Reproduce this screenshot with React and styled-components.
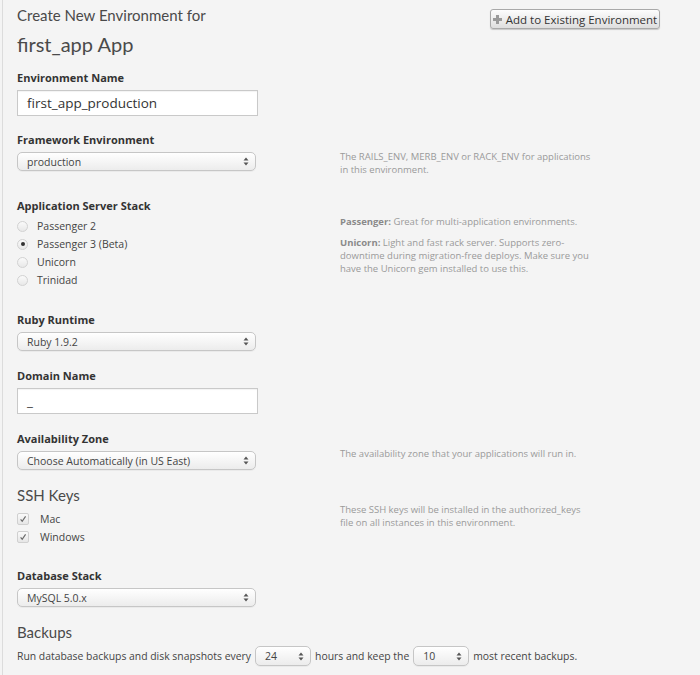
import React from "react";
import styled, { createGlobalStyle } from "styled-components";

const Global = createGlobalStyle`
  html, body { margin: 0; padding: 0; background: #f4f4f4; }
  body { font-family: "Open Sans", "Liberation Sans", sans-serif; color: #333; }
  * { box-sizing: border-box; }
`;

const Page = styled.div`
  margin-left: 2px;
  border-left: 1px solid #dcdcdc;
  padding: 4px 0 0 14px;
  width: 698px;
  min-height: 675px;
  background: #f4f4f4;
`;

const Header = styled.div`
  display: flex;
  justify-content: space-between;
  align-items: flex-start;
  width: 643px;
`;

const Titles = styled.div`
  display: flex;
  flex-direction: column;
`;

const Title = styled.div`
  font-family: "Lato", "Open Sans", sans-serif;
  font-size: ${(p) => p.$size}px;
  line-height: ${(p) => p.$lh}px;
  color: #4a4a4a;
  margin-top: ${(p) => p.$mt || 0}px;
`;

const AddButton = styled.button`
  margin-top: 5px;
  width: 170px;
  height: 20px;
  display: flex;
  align-items: center;
  justify-content: center;
  gap: 4px;
  border: 1px solid #a9a9a9;
  border-radius: 3px;
  background: linear-gradient(#fdfdfd, #dedede);
  box-shadow: 0 1px 1px rgba(0, 0, 0, 0.18);
  font-family: "Open Sans", sans-serif;
  font-size: 11.5px;
  color: #333;
  padding: 0;
`;

const Field = styled.div`
  display: grid;
  grid-template-columns: 323px 265px;
  margin-top: ${(p) => p.$mt}px;
`;

const Label = styled.div`
  grid-column: 1 / span 2;
  font-size: 11px;
  font-weight: 700;
  line-height: 14px;
  color: #333;
  margin-bottom: ${(p) => (p.$mb == null ? 5 : p.$mb)}px;
`;

const Heading = styled.div`
  grid-column: 1 / span 2;
  font-family: "Lato", "Open Sans", sans-serif;
  font-size: 15px;
  line-height: 18px;
  color: #4a4a4a;
  margin-bottom: ${(p) => p.$mb || 0}px;
`;

const Control = styled.div`
  grid-column: 1;
`;

const Desc = styled.div`
  grid-column: 2;
  align-self: start;
  margin-top: ${(p) => p.$mt || 0}px;
  margin-bottom: -40px;
  max-width: 255px;
  font-size: 9.5px;
  line-height: 13px;
  color: #9a9a9a;
`;

const DescPara = styled.div`
  margin-bottom: 8px;
`;

const DescKey = styled.span`
  color: #8a8a8a;
  font-weight: 700;
`;

const TextInput = styled.div`
  width: 241px;
  height: 26px;
  background: #fff;
  border: 1px solid #c9c9c9;
  box-shadow: inset 0 1px 1px rgba(0, 0, 0, 0.05);
  font-size: 13.5px;
  line-height: 24px;
  padding-left: 9px;
  color: #333;
`;

const SelectBox = styled.div`
  width: ${(p) => p.$w || 239}px;
  height: ${(p) => p.$h || 19}px;
  flex-shrink: 0;
  display: flex;
  align-items: center;
  justify-content: space-between;
  padding: 0 6px 0 9px;
  border: 1px solid #c6c6c6;
  border-radius: 5px;
  background: linear-gradient(#ffffff, #ececec);
  box-shadow: 0 1px 0 rgba(0, 0, 0, 0.04);
  font-size: 10.5px;
  color: #444;
`;

const Arrows = () => (
  <svg width="6" height="9" viewBox="0 0 6 9">
    <path d="M3 0.5 L5.5 3.5 H0.5 Z" fill="#555" />
    <path d="M3 8.5 L5.5 5.5 H0.5 Z" fill="#555" />
  </svg>
);

const Select = ({ children, w, h }) => (
  <SelectBox $w={w} $h={h}>
    <span>{children}</span>
    <Arrows />
  </SelectBox>
);

const OptionList = styled.div`
  display: flex;
  flex-direction: column;
`;

const OptionRow = styled.div`
  display: flex;
  align-items: center;
  height: 18px;
  font-size: 10.5px;
  color: #444;
  gap: 9px;
`;

const RadioDot = styled.span`
  width: 11px;
  height: 11px;
  border-radius: 50%;
  border: 1px solid #d2d2d2;
  background: linear-gradient(#fafafa, #e8e8e8);
  display: flex;
  align-items: center;
  justify-content: center;
  &::after {
    content: "";
    width: 4px;
    height: 4px;
    border-radius: 50%;
    background: ${(p) => (p.$on ? "#333" : "transparent")};
  }
`;

const CheckBox = styled.span`
  width: 12px;
  height: 12px;
  border-radius: 2px;
  border: 1px solid #d0d0d0;
  background: linear-gradient(#fafafa, #e6e6e6);
  display: flex;
  align-items: center;
  justify-content: center;
  margin-right: 2px;
`;

const Tick = () => (
  <svg width="8" height="8" viewBox="0 0 9 9">
    <path d="M1.8 5 L3.6 7 L7.4 1.6" stroke="#6a6a6a" strokeWidth="1.3" fill="none" />
  </svg>
);

const Plus = () => (
  <svg width="9" height="9" viewBox="0 0 9 9">
    <path d="M3 0 H6 V3 H9 V6 H6 V9 H3 V6 H0 V3 H3 Z" fill="#9a9a9a" />
  </svg>
);

const BackupRow = styled.div`
  display: flex;
  align-items: center;
  gap: 4px;
  font-size: 10.4px;
  color: #444;
  margin-top: 5px;
  white-space: nowrap;
`;

export default function App() {
  return (
    <>
      <Global />
      <Page>
        <Header>
          <Titles>
            <Title $size={15} $lh={22}>Create New Environment for</Title>
            <Title $size={20} $lh={26} $mt={5}>first_app App</Title>
          </Titles>
          <AddButton>
            <Plus />
            Add to Existing Environment
          </AddButton>
        </Header>

        <Field $mt={14}>
          <Label>Environment Name</Label>
          <Control>
            <TextInput>first_app_production</TextInput>
          </Control>
        </Field>

        <Field $mt={17}>
          <Label>Framework Environment</Label>
          <Control>
            <Select>production</Select>
          </Control>
          <Desc $mt={-2}>
            The RAILS_ENV, MERB_ENV or RACK_ENV for applications in this environment.
          </Desc>
        </Field>

        <Field $mt={28}>
          <Label $mb={4}>Application Server Stack</Label>
          <Control>
            <OptionList>
              <OptionRow><RadioDot />Passenger 2</OptionRow>
              <OptionRow><RadioDot $on />Passenger 3 (Beta)</OptionRow>
              <OptionRow><RadioDot />Unicorn</OptionRow>
              <OptionRow><RadioDot />Trinidad</OptionRow>
            </OptionList>
          </Control>
          <Desc $mt={-2}>
            <DescPara><DescKey>Passenger:</DescKey> Great for multi-application environments.</DescPara>
            <DescPara><DescKey>Unicorn:</DescKey> Light and fast rack server. Supports zero-downtime during migration-free deploys. Make sure you have the Unicorn gem installed to use this.</DescPara>
          </Desc>
        </Field>

        <Field $mt={24}>
          <Label>Ruby Runtime</Label>
          <Control>
            <Select>Ruby 1.9.2</Select>
          </Control>
        </Field>

        <Field $mt={18}>
          <Label>Domain Name</Label>
          <Control>
            <TextInput>_</TextInput>
          </Control>
        </Field>

        <Field $mt={18}>
          <Label>Availability Zone</Label>
          <Control>
            <Select>Choose Automatically (in US East)</Select>
          </Control>
          <Desc $mt={-4}>The availability zone that your applications will run in.</Desc>
        </Field>

        <Field $mt={16}>
          <Heading $mb={6}>SSH Keys</Heading>
          <Control>
            <OptionList>
              <OptionRow><CheckBox><Tick /></CheckBox>Mac</OptionRow>
              <OptionRow><CheckBox><Tick /></CheckBox>Windows</OptionRow>
            </OptionList>
          </Control>
          <Desc $mt={-7}>
            These SSH keys will be installed in the authorized_keys file on all instances in this environment.
          </Desc>
        </Field>

        <Field $mt={23}>
          <Label>Database Stack</Label>
          <Control>
            <Select>MySQL 5.0.x</Select>
          </Control>
        </Field>

        <Field $mt={16}>
          <Heading>Backups</Heading>
        </Field>
        <BackupRow>
          <span>Run database backups and disk snapshots every</span>
          <Select w={56} h={20}>24</Select>
          <span>hours and keep the</span>
          <Select w={56} h={20}>10</Select>
          <span>most recent backups.</span>
        </BackupRow>
      </Page>
    </>
  );
}
